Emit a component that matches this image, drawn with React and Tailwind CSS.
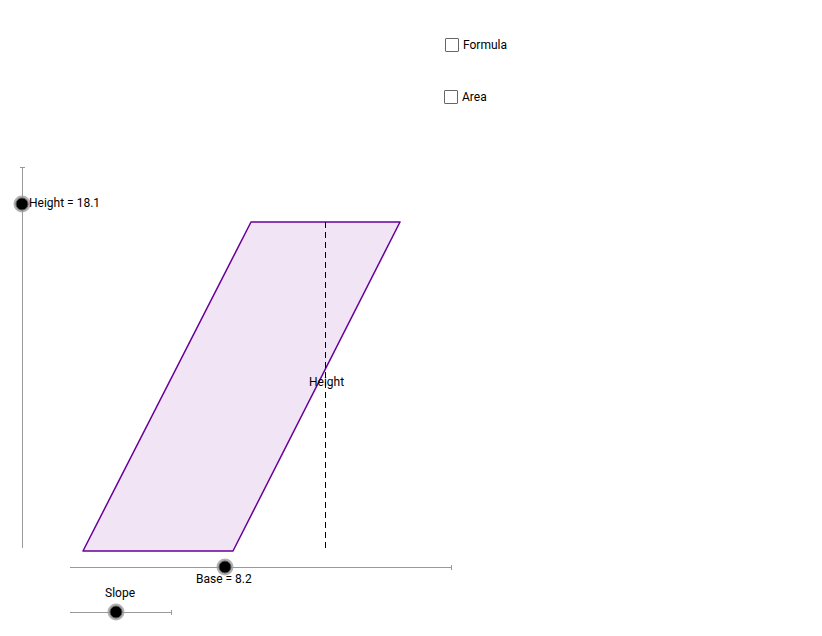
import React from "react";

const Point = ({ x, y }) => (
  <g>
    <circle cx={x} cy={y} r={8.5} fill="#9e9e9e" opacity={0.8} />
    <circle cx={x} cy={y} r={6} fill="#000" stroke="#555" strokeWidth={1} />
  </g>
);

const CheckRow = ({ label, className }) => (
  <div className={`absolute flex items-center gap-[4px] ${className}`}>
    <div className="w-[14px] h-[14px] border border-[#666] rounded-[1px] bg-white" />
    <span className="text-[12px] text-black leading-none">{label}</span>
  </div>
);

export default function App() {
  return (
    <div
      className="relative w-[822px] h-[636px] bg-white overflow-hidden"
      style={{ fontFamily: "Roboto, 'Liberation Sans', sans-serif" }}
    >
      <svg className="absolute inset-0" width="822" height="636">
        {/* vertical slider (Height) */}
        <line x1="22.5" y1="167" x2="22.5" y2="548" stroke="#999" strokeWidth="1" />
        <line x1="20" y1="167.5" x2="25" y2="167.5" stroke="#999" strokeWidth="1" />
        {/* base slider */}
        <line x1="70" y1="567.5" x2="452" y2="567.5" stroke="#999" strokeWidth="1" />
        <line x1="451.5" y1="565" x2="451.5" y2="570" stroke="#999" strokeWidth="1" />
        {/* slope slider */}
        <line x1="70" y1="612.5" x2="172" y2="612.5" stroke="#999" strokeWidth="1" />
        <line x1="171.5" y1="610" x2="171.5" y2="615" stroke="#999" strokeWidth="1" />

        {/* parallelogram */}
        <polygon
          points="83,551 233,551 400,222 251,222"
          fill="#f0e4f5"
          stroke="#660099"
          strokeWidth="1.5"
          strokeLinejoin="round"
        />
        {/* height dashed */}
        <line
          x1="325.5"
          y1="222"
          x2="325.5"
          y2="551"
          stroke="#000"
          strokeWidth="1"
          strokeDasharray="6 4"
        />

        <Point x={22} y={204} />
        <Point x={225} y={567} />
        <Point x={116} y={612} />

        <g fontSize="12" fill="#000" fontFamily="Roboto, 'Liberation Sans', sans-serif">
          <text x="29" y="207">Height = 18.1</text>
          <text x="196" y="583">Base = 8.2</text>
          <text x="105" y="597">Slope</text>
          <text x="309" y="386">Height</text>
        </g>
      </svg>

      <CheckRow label="Formula" className="left-[445px] top-[38px]" />
      <CheckRow label="Area" className="left-[444px] top-[90px]" />
    </div>
  );
}
